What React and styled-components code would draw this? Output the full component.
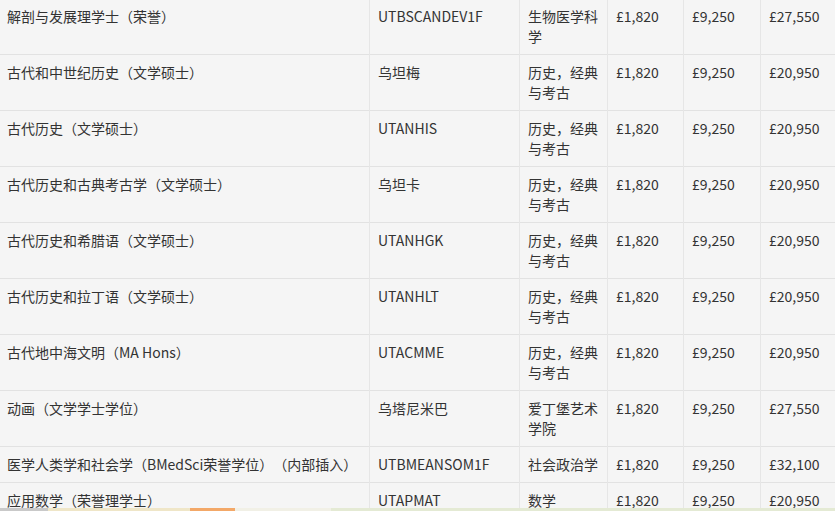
import styled, { createGlobalStyle } from "styled-components";

const GlobalStyle = createGlobalStyle`
  html, body {
    margin: 0;
    padding: 0;
    background-color: #f5f5f5;
    overflow: hidden;
  }
`;

const courses = [
  ["解剖与发展理学士（荣誉）", "UTBSCANDEV1F", "生物医学科学", "£27,550"],
  ["古代和中世纪历史（文学硕士）", "乌坦梅", "历史，经典与考古", "£20,950"],
  ["古代历史（文学硕士）", "UTANHIS", "历史，经典与考古", "£20,950"],
  ["古代历史和古典考古学（文学硕士）", "乌坦卡", "历史，经典与考古", "£20,950"],
  ["古代历史和希腊语（文学硕士）", "UTANHGK", "历史，经典与考古", "£20,950"],
  ["古代历史和拉丁语（文学硕士）", "UTANHLT", "历史，经典与考古", "£20,950"],
  ["古代地中海文明（MA Hons）", "UTACMME", "历史，经典与考古", "£20,950"],
  ["动画（文学学士学位）", "乌塔尼米巴", "爱丁堡艺术学院", "£27,550"],
  ["医学人类学和社会学（BMedSci荣誉学位）（内部插入）", "UTBMEANSOM1F", "社会政治学", "£32,100"],
  ["应用数学（荣誉理学士）", "UTAPMAT", "数学", "£20,950"],
];

export default function App() {
  return (
    <>
      <GlobalStyle />
      <Table>
        <colgroup>
          <col style={{ width: 371 }} />
          <col style={{ width: 150 }} />
          <col style={{ width: 88 }} />
          <col style={{ width: 76 }} />
          <col style={{ width: 77 }} />
          <col style={{ width: 90 }} />
        </colgroup>
        <tbody>
          {courses.map(([name, code, school, intl]) => (
            <Row key={name}>
              <Cell>{name}</Cell>
              <Cell>{code}</Cell>
              <Cell>{school}</Cell>
              <Cell>£1,820</Cell>
              <Cell>£9,250</Cell>
              <Cell>{intl}</Cell>
            </Row>
          ))}
        </tbody>
      </Table>
      <BottomStrip>
        <Segment $w={48} $c="#c9c9c9" />
        <Segment $w={142} $c="#efe6c8" />
        <Segment $w={45} $c="#f3a868" />
        <Segment $w={96} $c="#f1f0e6" />
        <Segment $grow $c="#e4ead4" />
      </BottomStrip>
    </>
  );
}

const Table = styled.table`
  border-collapse: collapse;
  table-layout: fixed;
  width: 852px;
  margin: -1px 0 0 -2px;
  font-family: "Noto Sans CJK SC", "Noto Sans", sans-serif;
  font-size: 14px;
  line-height: 20px;
  color: #333333;
  text-spacing-trim: space-all;
`;

const Row = styled.tr`
  border-bottom: 1px solid #e2e2e2;
`;

const Cell = styled.td`
  vertical-align: top;
  padding: 7px 8px 8px 8px;
  border-left: 1px solid #e6e6e6;
  word-break: break-all;
`;

const BottomStrip = styled.div`
  position: fixed;
  left: 0;
  right: 0;
  bottom: 0;
  height: 3px;
  display: flex;
`;

const Segment = styled.div`
  width: ${(p) => (p.$w ? `${p.$w}px` : "auto")};
  flex: ${(p) => (p.$grow ? 1 : "none")};
  background-color: ${(p) => p.$c};
`;
